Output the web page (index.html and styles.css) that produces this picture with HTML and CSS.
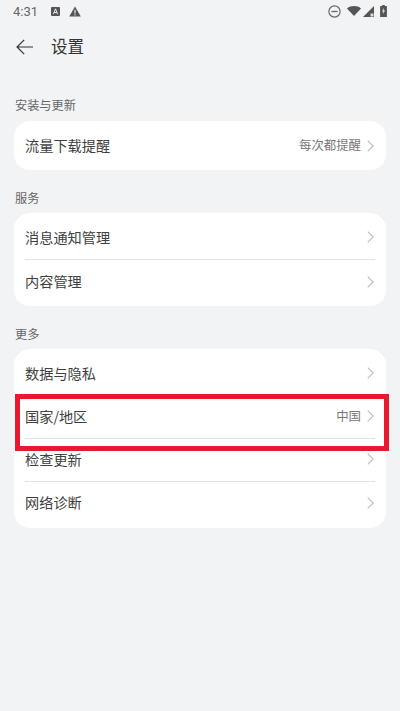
FILE: index.html
```html
<!DOCTYPE html>
<html lang="zh-CN">
<head>
    <meta charset="UTF-8">
    <meta name="viewport" content="width=device-width, initial-scale=1.0">
    <title>设置</title>
    <link rel="stylesheet" href="styles.css">
</head>
<body>
    <div class="status-bar">
        <span class="time">4:31</span>
        <svg class="status-icon" width="9" height="9" viewBox="0 0 9 9"><rect width="9" height="9" rx="1" fill="#555"/><path d="M2.4 7.2 4.5 1.8l2.1 5.4M3.2 5.5h2.6" fill="none" stroke="#eee" stroke-width="1"/></svg>
        <svg class="status-icon warn" width="12" height="11" viewBox="0 0 12 11"><path d="M6 0.4 11.8 10.6H0.2Z" fill="#555"/><path d="M6 3.8v3.6M6 8.2v1.2" stroke="#f1f2f4" stroke-width="1.1"/></svg>
        <span class="spacer"></span>
        <svg class="status-icon" width="13" height="13" viewBox="0 0 13 13"><circle cx="6.5" cy="6.5" r="5.6" fill="none" stroke="#666" stroke-width="1.2"/><path d="M3.4 6.5h6.2" stroke="#666" stroke-width="1.3"/></svg>
        <svg class="status-icon wifi" width="14" height="10" viewBox="0 0 14 10"><path d="M0 2.4C3.9-0.7 10.1-0.7 14 2.4L7 10Z" fill="#555"/></svg>
        <svg class="status-icon signal" width="11" height="11" viewBox="0 0 11 11"><path d="M11 0V11H0Z" fill="#555"/><path d="M7.5 7.5h3v3h-3Z" fill="#ddd"/></svg>
        <svg class="status-icon battery" width="7" height="12" viewBox="0 0 7 12"><path d="M2.2 0h2.6v1H6.4a.5.5 0 0 1 .5.5v10a.5.5 0 0 1-.5.5H.6a.5.5 0 0 1-.5-.5v-10a.5.5 0 0 1 .5-.5h1.6Z" fill="#555"/><path d="M3.9 2.8 2 6.4h1.4L3 9.2l2-3.8H3.6Z" fill="#eee"/></svg>
    </div>

    <header class="title-bar">
        <svg class="back" width="17" height="16" viewBox="0 0 17 16"><path d="M8.2 0.8 1 8l7.2 7.2M1 8H17" fill="none" stroke="#333" stroke-width="1.2"/></svg>
        <h1>设置</h1>
    </header>

    <h2 class="section-title">安装与更新</h2>
    <section class="card">
        <div class="row">
            <span class="row-label">流量下载提醒</span>
            <span class="row-value">每次都提醒</span>
            <svg class="chevron" width="7" height="12" viewBox="0 0 7 12"><path d="M0.7 0.7 6.2 6 0.7 11.3" fill="none" stroke="#bbb" stroke-width="1.1"/></svg>
        </div>
    </section>

    <h2 class="section-title">服务</h2>
    <section class="card card-services">
        <div class="row line">
            <span class="row-label">消息通知管理</span>
            <svg class="chevron" width="7" height="12" viewBox="0 0 7 12"><path d="M0.7 0.7 6.2 6 0.7 11.3" fill="none" stroke="#bbb" stroke-width="1.1"/></svg>
        </div>
        <div class="row">
            <span class="row-label">内容管理</span>
            <svg class="chevron" width="7" height="12" viewBox="0 0 7 12"><path d="M0.7 0.7 6.2 6 0.7 11.3" fill="none" stroke="#bbb" stroke-width="1.1"/></svg>
        </div>
    </section>

    <h2 class="section-title">更多</h2>
    <section class="card card-more">
        <div class="row line">
            <span class="row-label">数据与隐私</span>
            <svg class="chevron" width="7" height="12" viewBox="0 0 7 12"><path d="M0.7 0.7 6.2 6 0.7 11.3" fill="none" stroke="#bbb" stroke-width="1.1"/></svg>
        </div>
        <div class="row line">
            <span class="row-label">国家/地区</span>
            <span class="row-value">中国</span>
            <svg class="chevron" width="7" height="12" viewBox="0 0 7 12"><path d="M0.7 0.7 6.2 6 0.7 11.3" fill="none" stroke="#bbb" stroke-width="1.1"/></svg>
        </div>
        <div class="row line">
            <span class="row-label">检查更新</span>
            <svg class="chevron" width="7" height="12" viewBox="0 0 7 12"><path d="M0.7 0.7 6.2 6 0.7 11.3" fill="none" stroke="#bbb" stroke-width="1.1"/></svg>
        </div>
        <div class="row">
            <span class="row-label">网络诊断</span>
            <svg class="chevron" width="7" height="12" viewBox="0 0 7 12"><path d="M0.7 0.7 6.2 6 0.7 11.3" fill="none" stroke="#bbb" stroke-width="1.1"/></svg>
        </div>
        <div class="highlight"></div>
    </section>
</body>
</html>
```

FILE: styles.css
```css
html, body {
    height: 100%;
}
body {
    margin: 0;
    overflow: hidden;
    background-color: #f2f3f5;
    font-family: "Noto Sans CJK SC", "Liberation Sans", sans-serif;
    color: #333;
}
.status-bar {
    display: flex;
    align-items: center;
    height: 22px;
    padding: 0 13px;
}
.time {
    font-family: Roboto, sans-serif;
    font-size: 13px;
    color: #666;
    margin-right: 13px;
}
.status-icon {
    display: block;
}
.warn {
    margin-left: 9px;
}
.wifi {
    margin-left: 6px;
}
.signal {
    margin-left: 2px;
}
.battery {
    margin-left: 6px;
}
.spacer {
    flex: 1;
}
.title-bar {
    display: flex;
    align-items: center;
    height: 50px;
    margin-bottom: 5px;
    padding-left: 16px;
}
.title-bar h1 {
    margin: 0 0 2px 18px;
    font-size: 16.5px;
    font-weight: 400;
    color: #333;
}
.section-title {
    margin: 0;
    padding: 18px 0 0 15px;
    height: 43px;
    line-height: 20px;
    box-sizing: border-box;
    font-size: 12.2px;
    font-weight: 400;
    color: #666;
}
.title-bar + .section-title {
    height: 44px;
}
.card {
    margin: 0 14px;
    padding: 3px 11px;
    background-color: #fff;
    border-radius: 16px;
}
.row {
    display: flex;
    align-items: center;
    height: 43px;
    box-sizing: border-box;
}
.line {
    border-bottom: 1px solid #e2e2e4;
}
.card-services {
    padding: 2.5px 11px;
}
.card-services .row {
    height: 44px;
}
.row-label {
    flex: 1;
    margin-bottom: 1px;
    font-size: 14.2px;
    line-height: 20px;
    color: #404040;
}
.row-value {
    margin: 0 6px 1px 0;
    font-size: 12.4px;
    line-height: 18px;
    color: #777;
}
.chevron {
    display: block;
    margin-right: 1px;
}
.card-more {
    position: relative;
    padding-top: 4px;
}
.card-more .row {
    padding-bottom: 2px;
}
.highlight {
    position: absolute;
    left: 1px;
    right: -3px;
    top: 45px;
    height: 57px;
    box-sizing: border-box;
    border: 5px solid #e8192c;
}
```
